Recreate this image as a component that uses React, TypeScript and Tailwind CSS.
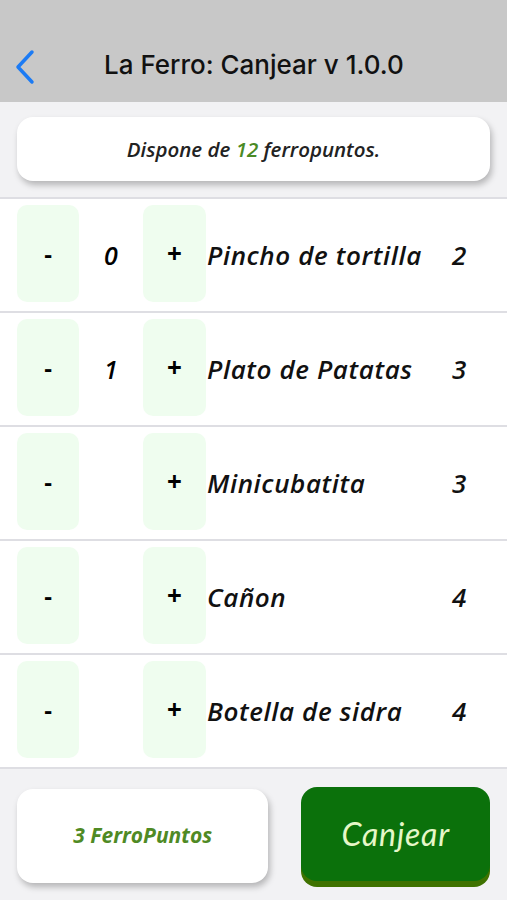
import React, { useState } from "react";

type Item = { name: string; points: number; qty: number | null };

const initialItems: Item[] = [
  { name: "Pincho de tortilla", points: 2, qty: 0 },
  { name: "Plato de Patatas", points: 3, qty: 1 },
  { name: "Minicubatita", points: 3, qty: null },
  { name: "Cañon", points: 4, qty: null },
  { name: "Botella de sidra", points: 4, qty: null },
];

function Row({ item }: { item: Item }) {
  return (
    <div className="flex h-[114px] items-start bg-white pt-[6px] border-b-2 border-[#dedee3]">
      <button className="ml-[17px] flex h-[97px] w-[62px] items-center justify-center rounded-[10px] bg-[#effdef] text-[24px] font-bold text-black">
        -
      </button>
      <div className="flex h-[97px] w-[64px] items-center justify-center pt-[4px] text-[25px] italic font-semibold">
        {item.qty ?? ""}
      </div>
      <button className="flex h-[97px] w-[63px] items-center justify-center rounded-[10px] bg-[#effdef] text-[26px] font-bold text-black">
        +
      </button>
      <div className="flex h-[97px] flex-1 items-center pl-px pt-[4px] text-[26px] italic font-semibold tracking-[0.6px] text-[#111]">
        {item.name}
      </div>
      <div className="flex h-[97px] w-[66px] items-center pl-[11px] pt-[4px] text-[26px] italic font-semibold text-[#111]">
        {item.points}
      </div>
    </div>
  );
}

export default function App() {
  const [items] = useState(initialItems);

  return (
    <div className="flex h-[900px] w-[507px] flex-col bg-[#f2f2f4] font-['Open_Sans',sans-serif]">
      {/* header */}
      <div className="flex h-[102px] shrink-0 items-end bg-[#c8c8c8] pb-[17px]">
        <svg width="40" height="36" viewBox="0 0 40 36" className="ml-[6px]">
          <path d="M26 3 L12 18 L26 33" fill="none" stroke="#1c7bf4" strokeWidth="3.5" strokeLinecap="round" strokeLinejoin="round" />
        </svg>
        <h1 className="ml-[58px] pb-[1px] font-['Inter',sans-serif] text-[26px] font-medium text-[#111]">
          La Ferro: Canjear v 1.0.0
        </h1>
      </div>

      {/* balance */}
      <div className="shrink-0 px-[17px] pt-[15px] pb-[16px]">
        <div className="flex h-[64px] items-center justify-center rounded-[16px] bg-white shadow-[2px_4px_6px_rgba(0,0,0,0.25)]">
          <p className="text-[20.5px] italic font-semibold text-[#222]">
            Dispone de <span className="text-[#4a8a25]">12</span> ferropuntos.
          </p>
        </div>
      </div>

      {/* list */}
      <div className="shrink-0 border-t-2 border-[#dedee3]">
        {items.map((item) => (
          <Row key={item.name} item={item} />
        ))}
      </div>

      {/* footer */}
      <div className="flex flex-1 items-start gap-[33px] px-[17px] pt-[18px]">
        <div className="mt-[2px] flex h-[94px] w-[252px] items-center justify-center rounded-[16px] bg-white shadow-[2px_4px_6px_rgba(0,0,0,0.25)]">
          <span className="text-[21px] italic font-bold text-[#4f8a24]">3 FerroPuntos</span>
        </div>
        <button className="flex h-[94px] w-[189px] items-center justify-center rounded-[16px] bg-[#0b710b] shadow-[0_6px_0_#3f7200]">
          <span className="font-['Lato',sans-serif] text-[32px] italic text-[#e6f7c8] tracking-wide">Canjear</span>
        </button>
      </div>
    </div>
  );
}
